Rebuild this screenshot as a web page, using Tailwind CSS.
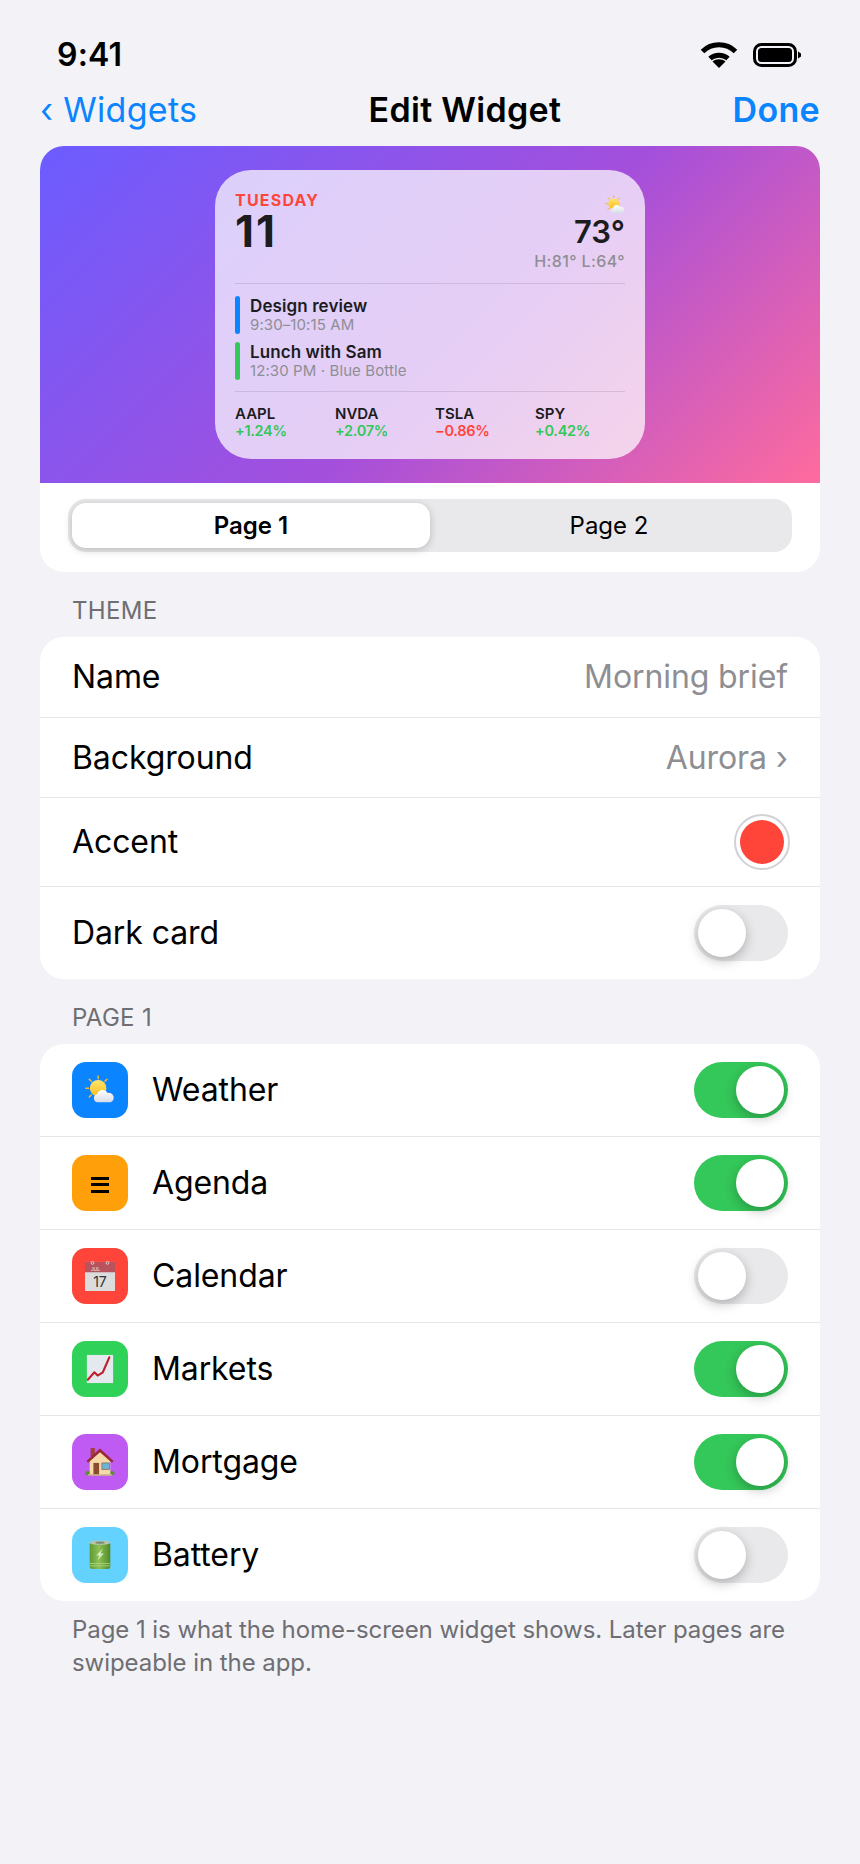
<!DOCTYPE html>
<html lang="en">
<head>
    <meta charset="UTF-8">
    <meta name="viewport" content="width=device-width, initial-scale=1.0">
    <title>Edit Widget</title>
    <script src="https://cdn.jsdelivr.net/npm/@tailwindcss/browser@4"></script>
</head>
<body class="bg-[#f2f2f7] min-h-screen font-[Inter,sans-serif] text-black">
    <!-- shared emoji drawings -->
    <svg class="absolute w-0 h-0">
        <defs>
            <linearGradient id="sunFill" x1="0" y1="0" x2="0" y2="1"><stop offset="0" stop-color="#ffe36b"/><stop offset="1" stop-color="#fbbf24"/></linearGradient>
            <linearGradient id="cloudFill" x1="0" y1="0" x2="0" y2="1"><stop offset="0" stop-color="#ffffff"/><stop offset="1" stop-color="#d8dde6"/></linearGradient>
            <linearGradient id="battFill" x1="0" y1="0" x2="1" y2="0"><stop offset="0" stop-color="#5f9a36"/><stop offset=".45" stop-color="#8cc152"/><stop offset="1" stop-color="#4f8a2c"/></linearGradient>
            <symbol id="sunCloud" viewBox="0 0 32 32">
                <g stroke="#f2b632" stroke-width="1.600" stroke-linecap="round">
                    <path d="M14 1v3M4.500 4.500l2.200 2.200M23.500 4.500l-2.200 2.200M0.800 14h3M4.500 23.500l2.200-2.200"/>
                </g>
                <circle cx="14" cy="14" r="8.800" fill="url(#sunFill)"/>
                <path d="M13.500 29a4.300 4.300 0 0 1-.6-8.500 6 6 0 0 1 11.200-1.300 5 5 0 0 1 2.900 9.800z" fill="url(#cloudFill)"/>
            </symbol>
            <symbol id="calendar" viewBox="0 0 32 32">
                <rect x="0" y="1" width="32" height="31" fill="#dcdcdc"/>
                <rect x="0" y="1" width="32" height="11" fill="#b8525c"/>
                <circle cx="8" cy="2" r="1.500" fill="none" stroke="#eee" stroke-width=".8"/>
                <circle cx="24" cy="2" r="1.500" fill="none" stroke="#eee" stroke-width=".8"/>
                <text x="6" y="10.500" font-family="Inter" font-size="5.500" fill="#eeeeee">JUL</text>
                <text x="16" y="27.500" text-anchor="middle" font-family="Inter" font-size="15" fill="#333">17</text>
            </symbol>
            <symbol id="chart" viewBox="0 0 32 32">
                <rect x="2" y="1" width="28" height="30" fill="#e4e8ef"/>
                <path d="M3 27.500l7-8 3.500 3.500 5.500-3.500 7-16" fill="none" stroke="#c01f28" stroke-width="2.200" stroke-linejoin="round" stroke-linecap="round"/>
            </symbol>
            <symbol id="house" viewBox="0 0 32 32">
                <ellipse cx="4" cy="28" rx="3.500" ry="2.400" fill="#5f8a3a"/>
                <ellipse cx="28" cy="28" rx="3.500" ry="2.400" fill="#5f8a3a"/>
                <rect x="6" y="1" width="4.500" height="9" fill="#a63d3d"/>
                <path d="M5 14L16 4l11 10v16H5z" fill="#f6d9a8"/>
                <path d="M1.500 15L16 1.500 30.500 15l-1.800 1.800L16 5.500 3.300 16.800z" fill="#9a2a3a"/>
                <rect x="9" y="17" width="6" height="13" fill="#8c4a2f"/>
                <rect x="18" y="17" width="8" height="7" fill="#6fb2d8" stroke="#8c6a4f" stroke-width=".8"/>
                <rect x="3" y="29" width="26" height="1.600" fill="#c9b48a"/>
            </symbol>
            <symbol id="battery" viewBox="0 0 32 32">
                <rect x="5" y="2" width="22" height="29" rx="2.500" fill="url(#battFill)"/>
                <ellipse cx="16" cy="2.800" rx="11" ry="2.300" fill="#b8c4b0"/>
                <ellipse cx="16" cy="2.800" rx="5" ry="1.100" fill="#7b8c72"/>
                <path d="M5 25h22M5 27.500h22" stroke="#b4d98a" stroke-width=".8"/>
                <path d="M19 9l-7 7.500h3.500L13 22l7-7.500h-3.500z" fill="#d8ecc4"/>
            </symbol>
        </defs>
    </svg>

    <div class="w-[860px] mx-auto">
        <!-- status bar -->
        <div class="h-[80px] pl-[57px] pr-[59px] pt-[36px] flex justify-between items-start">
            <span class="text-[32px] leading-[37px] font-semibold tracking-[0.2px]">9:41</span>
            <div class="flex items-center gap-[15px] pt-[5px]">
                <svg width="38" height="27" viewBox="0 0 38 27" fill="none" stroke="#000" stroke-width="5">
                    <path d="M2.500 10.500C11.500 1.500 26.500 1.500 35.500 10.500"/>
                    <path d="M10 17.500C15 13 23 13 28 17.500"/>
                    <path d="M19 27l-6.500-6.500C16 17.500 22 17.500 25.500 20.500z" fill="#000" stroke="none"/>
                </svg>
                <svg width="48" height="24" viewBox="0 0 48 24" fill="none">
                    <rect x="1.500" y="1.500" width="41" height="21" rx="7" stroke="#000" stroke-width="3"/>
                    <rect x="5" y="5" width="34" height="14" rx="3.500" fill="#000"/>
                    <path d="M45 8.500l3 2v3l-3 2z" fill="#000"/>
                </svg>
            </div>
        </div>

        <!-- nav -->
        <div class="h-[66px] px-10 pt-[10px] flex justify-between items-start text-[34px] leading-[40px] tracking-[0.3px]">
            <span class="text-[#0a84ff]">‹ Widgets</span>
            <span class="font-semibold">Edit Widget</span>
            <span class="text-[#0a84ff] font-semibold">Done</span>
        </div>

        <div class="px-10">
            <!-- preview card -->
            <div class="bg-white rounded-[24px] overflow-hidden">
                <div class="h-[337px] py-6 flex justify-center bg-[linear-gradient(135deg,#6c5cff_0%,#a44fdc_55%,#ff6b9d_100%)]">
                    <div class="w-[430px] h-[289px] rounded-[36px] bg-white/72 p-5 flex flex-col">
                        <div class="h-[93px] flex justify-between">
                            <div>
                                <div class="text-[16px] leading-[20px] font-bold tracking-[1.2px] text-[#ff453a]">TUESDAY</div>
                                <div class="text-[44px] leading-[42px] font-bold tracking-[2px] text-[#1c1c1e]">11</div>
                            </div>
                            <div class="flex flex-col items-end text-right">
                                <svg width="20" height="20" class="mt-[5px]"><use href="#sunCloud"/></svg>
                                <div class="text-[31px] leading-[36px] font-semibold text-[#1c1c1e] -mt-[1px]">73°</div>
                                <div class="text-[16px] leading-[20px] font-medium tracking-[0.4px] text-[#8e8e93] mt-[1px]">H:81° L:64°</div>
                            </div>
                        </div>
                        <div class="border-t border-black/10 pt-3 flex flex-col gap-2 h-[109px]">
                            <div class="flex gap-[10px] h-[38px]">
                                <div class="w-[5px] rounded-full bg-[#0a84ff]"></div>
                                <div>
                                    <div class="text-[17px] leading-[20px] font-semibold tracking-[0.1px] text-[#1c1c1e]">Design review</div>
                                    <div class="text-[15px] leading-[18px] tracking-[0.1px] text-[#8e8e93]">9:30–10:15 AM</div>
                                </div>
                            </div>
                            <div class="flex gap-[10px] h-[38px]">
                                <div class="w-[5px] rounded-full bg-[#34c759]"></div>
                                <div>
                                    <div class="text-[17px] leading-[20px] font-semibold tracking-[0.1px] text-[#1c1c1e]">Lunch with Sam</div>
                                    <div class="text-[15px] leading-[18px] tracking-[0.1px] text-[#8e8e93]">12:30 PM · Blue Bottle</div>
                                </div>
                            </div>
                        </div>
                        <div class="border-t border-black/10 pt-[13px] grid grid-cols-4 gap-[10px]">
                            <div>
                                <div class="text-[15px] leading-[17px] font-semibold text-[#1c1c1e]">AAPL</div>
                                <div class="text-[14.5px] leading-[17px] font-semibold tracking-[-0.3px] text-[#34c759]">+1.24%</div>
                            </div>
                            <div>
                                <div class="text-[15px] leading-[17px] font-semibold text-[#1c1c1e]">NVDA</div>
                                <div class="text-[14.5px] leading-[17px] font-semibold tracking-[-0.3px] text-[#34c759]">+2.07%</div>
                            </div>
                            <div>
                                <div class="text-[15px] leading-[17px] font-semibold text-[#1c1c1e]">TSLA</div>
                                <div class="text-[14.5px] leading-[17px] font-semibold tracking-[-0.3px] text-[#ff453a]">−0.86%</div>
                            </div>
                            <div>
                                <div class="text-[15px] leading-[17px] font-semibold text-[#1c1c1e]">SPY</div>
                                <div class="text-[14.5px] leading-[17px] font-semibold tracking-[-0.3px] text-[#34c759]">+0.42%</div>
                            </div>
                        </div>
                    </div>
                </div>
                <div class="pt-4 pb-5 px-7">
                    <div class="h-[53px] rounded-[18px] bg-[#e9e9eb] p-1 flex text-[24px]">
                        <div class="flex-1 rounded-[14px] bg-white font-semibold flex items-center justify-center shadow-[0_2px_8px_rgba(0,0,0,0.2)]">Page 1</div>
                        <div class="flex-1 flex items-center justify-center">Page 2</div>
                    </div>
                </div>
            </div>

            <!-- theme -->
            <div class="h-[65px] pl-8 pt-[24px] text-[24px] leading-[30px] tracking-[0.3px] text-[#6e6e73]">THEME</div>
            <div class="bg-white rounded-[24px] overflow-hidden text-[32px] tracking-[-0.1px]">
                <div class="h-[81px] px-8 flex items-center justify-between border-b border-[#e5e5ea]">
                    <span>Name</span>
                    <span class="text-[#8e8e93]">Morning brief</span>
                </div>
                <div class="h-[80px] px-8 flex items-center justify-between border-b border-[#e5e5ea]">
                    <span>Background</span>
                    <span class="text-[#8e8e93]">Aurora ›</span>
                </div>
                <div class="h-[89px] px-8 flex items-center justify-between border-b border-[#e5e5ea]">
                    <span>Accent</span>
                    <div class="w-[56px] h-[56px] -mr-[2px] rounded-full border-2 border-[#d1d1d6] flex items-center justify-center">
                        <div class="w-[44px] h-[44px] rounded-full bg-[#ff453a]"></div>
                    </div>
                </div>
                <div class="h-[92px] px-8 flex items-center justify-between">
                    <span>Dark card</span>
                    <div class="w-[94px] h-[56px] rounded-full bg-[#e9e9eb] p-1 flex justify-start">
                        <div class="w-[48px] h-[48px] rounded-full bg-white shadow-[0_4px_12px_rgba(0,0,0,0.25)]"></div>
                    </div>
                </div>
            </div>

            <!-- page 1 -->
            <div class="h-[65px] pl-8 pt-[24px] text-[24px] leading-[30px] tracking-[0.3px] text-[#6e6e73]">PAGE 1</div>
            <div class="bg-white rounded-[24px] overflow-hidden text-[32px] tracking-[-0.1px]">
                <div class="h-[93px] px-8 flex items-center border-b border-[#e5e5ea]">
                    <div class="w-[56px] h-[56px] rounded-[14px] bg-[#0a84ff] flex items-center justify-center"><svg width="30" height="30"><use href="#sunCloud"/></svg></div>
                    <span class="ml-6 flex-1">Weather</span>
                    <div class="w-[94px] h-[56px] rounded-full bg-[#34c759] p-1 flex justify-end">
                        <div class="w-[48px] h-[48px] rounded-full bg-white shadow-[0_4px_12px_rgba(0,0,0,0.25)]"></div>
                    </div>
                </div>
                <div class="h-[93px] px-8 flex items-center border-b border-[#e5e5ea]">
                    <div class="w-[56px] h-[56px] rounded-[14px] bg-[#ff9f0a] flex items-center justify-center">
                        <div class="w-[18px] mt-[3px] flex flex-col gap-[3.500px]">
                            <div class="h-[3px] bg-black"></div>
                            <div class="h-[3px] bg-black"></div>
                            <div class="h-[3px] bg-black"></div>
                        </div>
                    </div>
                    <span class="ml-6 flex-1">Agenda</span>
                    <div class="w-[94px] h-[56px] rounded-full bg-[#34c759] p-1 flex justify-end">
                        <div class="w-[48px] h-[48px] rounded-full bg-white shadow-[0_4px_12px_rgba(0,0,0,0.25)]"></div>
                    </div>
                </div>
                <div class="h-[93px] px-8 flex items-center border-b border-[#e5e5ea]">
                    <div class="w-[56px] h-[56px] rounded-[14px] bg-[#ff453a] flex items-center justify-center"><svg width="30" height="30"><use href="#calendar"/></svg></div>
                    <span class="ml-6 flex-1">Calendar</span>
                    <div class="w-[94px] h-[56px] rounded-full bg-[#e9e9eb] p-1 flex justify-start">
                        <div class="w-[48px] h-[48px] rounded-full bg-white shadow-[0_4px_12px_rgba(0,0,0,0.25)]"></div>
                    </div>
                </div>
                <div class="h-[93px] px-8 flex items-center border-b border-[#e5e5ea]">
                    <div class="w-[56px] h-[56px] rounded-[14px] bg-[#30d158] flex items-center justify-center"><svg width="30" height="30"><use href="#chart"/></svg></div>
                    <span class="ml-6 flex-1">Markets</span>
                    <div class="w-[94px] h-[56px] rounded-full bg-[#34c759] p-1 flex justify-end">
                        <div class="w-[48px] h-[48px] rounded-full bg-white shadow-[0_4px_12px_rgba(0,0,0,0.25)]"></div>
                    </div>
                </div>
                <div class="h-[93px] px-8 flex items-center border-b border-[#e5e5ea]">
                    <div class="w-[56px] h-[56px] rounded-[14px] bg-[#bf5af2] flex items-center justify-center"><svg width="30" height="30"><use href="#house"/></svg></div>
                    <span class="ml-6 flex-1">Mortgage</span>
                    <div class="w-[94px] h-[56px] rounded-full bg-[#34c759] p-1 flex justify-end">
                        <div class="w-[48px] h-[48px] rounded-full bg-white shadow-[0_4px_12px_rgba(0,0,0,0.25)]"></div>
                    </div>
                </div>
                <div class="h-[92px] px-8 flex items-center">
                    <div class="w-[56px] h-[56px] rounded-[14px] bg-[#64d2ff] flex items-center justify-center"><svg width="30" height="30"><use href="#battery"/></svg></div>
                    <span class="ml-6 flex-1">Battery</span>
                    <div class="w-[94px] h-[56px] rounded-full bg-[#e9e9eb] p-1 flex justify-start">
                        <div class="w-[48px] h-[48px] rounded-full bg-white shadow-[0_4px_12px_rgba(0,0,0,0.25)]"></div>
                    </div>
                </div>
            </div>

            <p class="pl-8 pr-6 pt-[12px] text-[24px] leading-[33px] tracking-[-0.06px] text-[#6e6e73]">Page 1 is what the home-screen widget shows. Later pages are swipeable in the app.</p>
        </div>
    </div>
</body>
</html>
